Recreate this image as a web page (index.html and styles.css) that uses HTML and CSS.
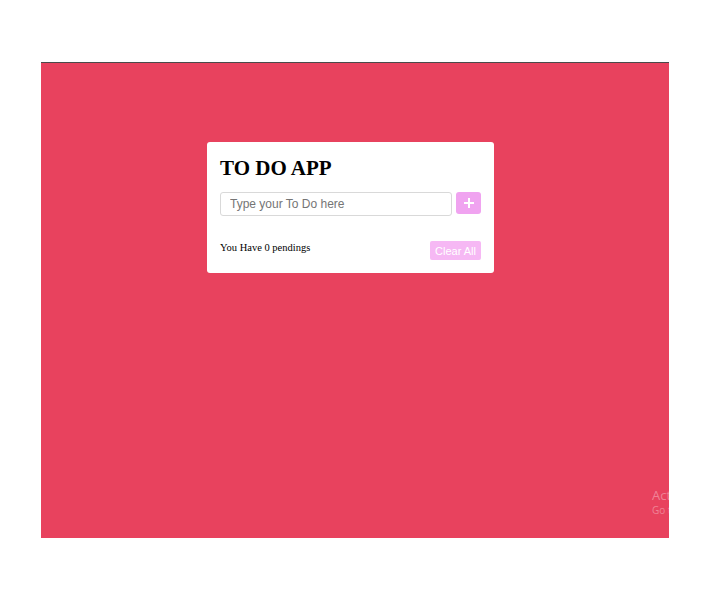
FILE: index.html
```html
<!DOCTYPE html>
<html>
<head>
<meta charset="utf-8">
<link rel="stylesheet" href="styles.css">
</head>
<body>
<div class="stage">
  <div class="card">
    <h1 class="title">TO DO APP</h1>
    <div class="input-row">
      <input class="todo-input" type="text" placeholder="Type your To Do here">
      <button class="add-btn" aria-label="Add">
        <svg width="12" height="12" viewBox="0 0 12 12"><path d="M6 1v10M1 6h10" stroke="#fff" stroke-width="2" fill="none"/></svg>
      </button>
    </div>
    <div class="footer-row">
      <span class="pending">You Have 0 pendings</span>
      <button class="clear-btn">Clear All</button>
    </div>
  </div>
  <div class="watermark">
    <div class="wm-title">Activate Windows</div>
    <div class="wm-sub">Go to Settings to activate Windows.</div>
  </div>
</div>
</body>
</html>
```
FILE: styles.css
```css
html, body {
  margin: 0;
  padding: 0;
  background: #ffffff;
}
body {
  padding: 62px 0 0 41px;
  font-family: "Liberation Serif", "Times New Roman", serif;
}
.stage {
  position: relative;
  width: 628px;
  height: 476px;
  background: #e8425e;
  border-top: 1px solid #4a4a4a;
  overflow: hidden;
  padding-top: 79px;
  box-sizing: border-box;
}
.card {
  margin-left: 166px;
  width: 287px;
  height: 131px;
  box-sizing: border-box;
  background: #fff;
  border-radius: 3px;
  padding: 13px 13px 0 13px;
}
.title {
  margin: 0;
  font-size: 21px;
  font-weight: bold;
  line-height: 26px;
  color: #000;
}
.input-row {
  display: flex;
  align-items: flex-start;
  gap: 4px;
  margin-top: 11px;
}
.todo-input {
  width: 232px;
  height: 24px;
  box-sizing: border-box;
  border: 1px solid #d9d9d9;
  border-radius: 3px;
  padding: 0 9px;
  font-family: "Liberation Sans", Arial, sans-serif;
  font-size: 12px;
  outline: none;
}
.todo-input::placeholder {
  color: #757575;
}
.add-btn {
  width: 25px;
  height: 22px;
  border: none;
  border-radius: 3px;
  background: #f0a3f0;
  display: flex;
  align-items: center;
  justify-content: center;
  padding: 0;
}
.footer-row {
  display: flex;
  justify-content: space-between;
  align-items: flex-start;
  margin-top: 25px;
  width: 261px;
}
.pending {
  font-size: 10.5px;
  color: #000;
  line-height: 13px;
}
.clear-btn {
  width: 51px;
  height: 19px;
  border: none;
  border-radius: 2px;
  background: #f6b8f4;
  color: #fff;
  font-family: "Liberation Sans", Arial, sans-serif;
  font-size: 11px;
  padding: 0;
}
.watermark {
  position: absolute;
  left: 611px;
  top: 424px;
  color: rgba(255, 255, 255, 0.35);
  font-family: "Open Sans", "Liberation Sans", sans-serif;
  white-space: nowrap;
}
.wm-title {
  font-size: 13px;
  line-height: 16px;
}
.wm-sub {
  font-size: 10px;
  line-height: 14px;
}
```
